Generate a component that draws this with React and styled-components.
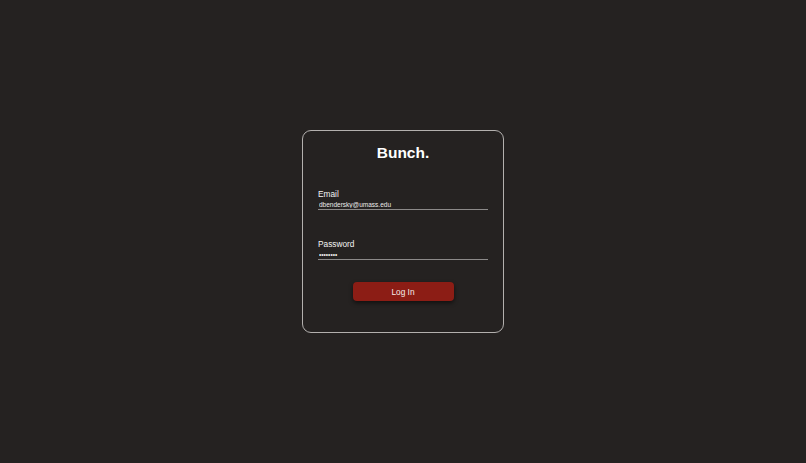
import React from 'react';
import styled, { createGlobalStyle } from 'styled-components';

const GlobalStyle = createGlobalStyle`
  html, body {
    margin: 0;
    padding: 0;
    height: 100%;
    background: #252221;
  }
  #root {
    height: 100%;
  }
`;

const Page = styled.div`
  height: 100%;
  display: flex;
  align-items: center;
  justify-content: center;
  font-family: 'Liberation Sans', Arial, sans-serif;
  color: #f2f2f2;
`;

const Card = styled.form`
  width: 202px;
  height: 203px;
  box-sizing: border-box;
  border: 1px solid #b3b0ae;
  border-radius: 9px;
  padding: 13px 15px 0;
  display: flex;
  flex-direction: column;
`;

const Title = styled.h1`
  margin: 0;
  font-size: 15.5px;
  line-height: 18px;
  font-weight: 700;
  text-align: center;
  color: #ffffff;
`;

const Field = styled.label`
  display: flex;
  flex-direction: column;
  margin-top: ${props => props.gap}px;
`;

const Label = styled.span`
  font-size: 8.3px;
  line-height: 9px;
  color: #f4f4f4;
`;

const Input = styled.input`
  all: unset;
  box-sizing: border-box;
  height: 11px;
  padding: 0 1px;
  font-family: 'Liberation Sans', Arial, sans-serif;
  font-size: 6.5px;
  line-height: 9px;
  color: #ececec;
  border-bottom: 1.5px solid #8c8a89;
`;

const Actions = styled.div`
  display: flex;
  justify-content: center;
  margin-top: 22px;
`;

const Button = styled.button`
  width: 101px;
  height: 19px;
  border: none;
  border-radius: 4px;
  background: #8c1d15;
  color: #f7ecea;
  font-family: 'Liberation Sans', Arial, sans-serif;
  font-size: 8.3px;
  box-shadow: 0 2px 4px rgba(0, 0, 0, 0.55);
  cursor: pointer;
`;

export default function App() {
  return (
    <Page>
      <GlobalStyle />
      <Card onSubmit={e => e.preventDefault()}>
        <Title>Bunch.</Title>
        <Field gap={28}>
          <Label>Email</Label>
          <Input type="email" defaultValue="dbendersky@umass.edu" />
        </Field>
        <Field gap={30}>
          <Label>Password</Label>
          <Input type="password" defaultValue="password" />
        </Field>
        <Actions>
          <Button type="submit">Log In</Button>
        </Actions>
      </Card>
    </Page>
  );
}
